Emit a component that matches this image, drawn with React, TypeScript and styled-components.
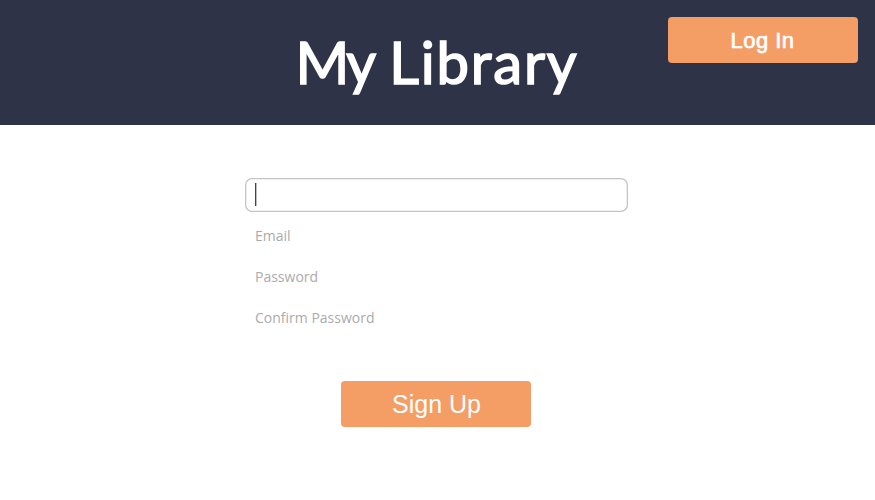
import React from 'react';
import styled, { createGlobalStyle } from 'styled-components';

const GlobalStyle = createGlobalStyle`
  * { box-sizing: border-box; }
  body { margin: 0; background: #fff; }
`;

const Page = styled.div`
  height: 500px;
  display: flex;
  flex-direction: column;
  overflow: hidden;
`;

const Header = styled.header`
  height: 125px;
  flex: none;
  background: #2e3348;
  display: grid;
  grid-template-columns: 1fr 284px 1fr;
  padding: 17px 17.5px 0;
`;

const Title = styled.h1`
  grid-column: 2;
  margin: 0;
  padding-top: 7px;
  color: #fff;
  font: 400 58px/76px Lato, sans-serif;
  letter-spacing: 1.8px;
  word-spacing: -1px;
  -webkit-text-stroke: 1.6px #fff;
  white-space: nowrap;
`;

const TitleWord = styled.span`
  letter-spacing: -2.5px;
`;

const Button = styled.button`
  width: 190px;
  height: 46px;
  padding: 0;
  border: 0;
  border-radius: 4px;
  background: #f49d65;
  color: #fff;
  font: 400 25px/47px "Liberation Sans", Arial, sans-serif;
`;

const LogIn = styled(Button)`
  justify-self: end;
  font-size: 22px;
  letter-spacing: 0.5px;
  -webkit-text-stroke: 0.7px #fff;
`;

const Form = styled.form`
  width: 383px;
  margin: 52.5px 0 0 245px;
  display: flex;
  flex-direction: column;
  gap: 7px;
`;

const Field = styled.label`
  height: 34px;
  display: flex;
  align-items: center;
  padding: 0 10px;
  color: #ababab;
  font: 400 14px/20px "Open Sans", sans-serif;
`;

const ActiveField = styled(Field)`
  border-radius: 7px;
  box-shadow: inset 0 0 0 1.3px #c4c4c4;
`;

const Caret = styled.span`
  width: 2px;
  height: 23px;
  background: linear-gradient(to right, #444 50%, #bbb 50%);
`;

const SignUp = styled(Button)`
  margin: 39px 0 0 96px;
  padding-left: 1px;
`;

export default function App() {
  return (
    <Page>
      <GlobalStyle />
      <Header>
        <Title><TitleWord>My</TitleWord> Library</Title>
        <LogIn type="button">Log In</LogIn>
      </Header>
      <Form>
        <ActiveField><Caret /></ActiveField>
        <Field>Email</Field>
        <Field>Password</Field>
        <Field>Confirm Password</Field>
        <SignUp type="button">Sign Up</SignUp>
      </Form>
    </Page>
  );
}
